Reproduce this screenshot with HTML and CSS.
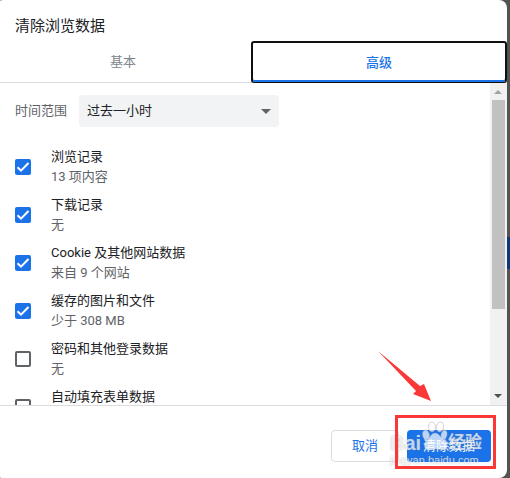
FILE: index.html
```
<!DOCTYPE html>
<html lang="zh-CN">
<head>
    <meta charset="UTF-8">
    <title>清除浏览数据</title>
    <link rel="stylesheet" href="styles.css">
</head>
<body>
    <div class="page-peek"></div>

    <div class="dialog" role="dialog" aria-labelledby="dialog-title">
        <h1 class="dialog-title" id="dialog-title">清除浏览数据</h1>

        <div class="tabs" role="tablist">
            <button class="tab" type="button" role="tab" aria-selected="false">基本</button>
            <button class="tab selected" type="button" role="tab" aria-selected="true">高级</button>
        </div>

        <div class="dialog-body">
            <div class="options">
                <div class="time-range">
                    <label for="range">时间范围</label>
                    <select class="range-select" id="range">
                        <option>过去一小时</option>
                    </select>
                </div>

                <label class="option">
                    <input type="checkbox" checked>
                    <span class="option-text">浏览记录<small>13 项内容</small></span>
                </label>
                <label class="option">
                    <input type="checkbox" checked>
                    <span class="option-text">下载记录<small>无</small></span>
                </label>
                <label class="option">
                    <input type="checkbox" checked>
                    <span class="option-text">Cookie 及其他网站数据<small>来自 9 个网站</small></span>
                </label>
                <label class="option">
                    <input type="checkbox" checked>
                    <span class="option-text">缓存的图片和文件<small>少于 308 MB</small></span>
                </label>
                <label class="option">
                    <input type="checkbox">
                    <span class="option-text">密码和其他登录数据<small>无</small></span>
                </label>
                <label class="option">
                    <input type="checkbox">
                    <span class="option-text">自动填充表单数据</span>
                </label>
            </div>

            <div class="scrollbar">
                <svg class="scroll-arrow up" viewBox="0 0 16 16"><path d="M4 10h8L8 6z"/></svg>
                <div class="scroll-thumb"></div>
                <svg class="scroll-arrow down" viewBox="0 0 16 16"><path d="M4 5h8L8 9z"/></svg>
            </div>
        </div>

        <div class="dialog-footer">
            <button class="btn cancel" type="button">取消</button>
            <button class="btn confirm" type="button">清除数据</button>
        </div>

        <!-- Annotations over the confirm button -->
        <div class="watermark">
            <span class="brand">Bai</span>
            <svg class="paw" viewBox="0 0 26 32">
                <ellipse cx="4" cy="14" rx="3.5" ry="5" transform="rotate(-12 4 14)"/>
                <ellipse cx="10" cy="6" rx="3.5" ry="5"/>
                <ellipse cx="18" cy="6" rx="3.5" ry="5" transform="rotate(8 18 6)"/>
                <ellipse cx="22" cy="14" rx="3" ry="5" transform="rotate(14 22 14)"/>
                <path d="M13 12c-4 0-5 5-9 8-3 3-2 9 3 9 3 0 4-1 7-1s4 1 7 1c5 0 6-6 2-9-4-3-6-8-10-8z"/>
            </svg>
            <span class="brand cn">经验</span>
            <span class="site">jingyan.baidu.com</span>
        </div>
        <div class="highlight"></div>
        <svg class="pointer" viewBox="0 0 54 51"><path d="M0 0 42 35 46 33 53 50 35 43 38 40z"/></svg>
    </div>
</body>
</html>
```

FILE: styles.css
```
:root {
    --blue: #1a73e8;
    --text-primary: #202124;
    --text-secondary: #5f6368;
    --line: #dadce0;
    --red: #fb3838;
}

* {
    margin: 0;
    padding: 0;
    box-sizing: border-box;
}

body {
    background: #535353;
    color: var(--text-primary);
    font-family: Roboto, "Noto Sans CJK SC", sans-serif;
    font-size: 13px;
    line-height: 20px;
    overflow: hidden;
}

button,
select {
    font: inherit;
}

/* Bit of the page behind the dialog */
.page-peek {
    position: absolute;
    top: 237px;
    right: 0;
    width: 8px;
    height: 32px;
    background: #0b3978;
}

.dialog {
    position: relative;
    display: flex;
    flex-direction: column;
    height: 100vh;
    margin: 0 3px 0 -5px;
    background: #fff;
    border-radius: 8px;
}

.dialog-title {
    padding: 16px 20px 5px;
    font-size: 15px;
    font-weight: 400;
    line-height: 20px;
}

.tabs {
    display: grid;
    grid-template-columns: 1fr 1fr;
    height: 42px;
    border-bottom: 1px solid var(--line);
}

.tab {
    height: 41px;
    border: none;
    background: none;
    color: #80868b;
}

/* Focus ring with the selection bar inside its bottom edge */
.tab.selected {
    height: 42px;
    border: 2px solid #101010;
    border-bottom-width: 1px;
    border-radius: 3px;
    box-shadow: inset 0 -2px var(--blue);
    color: var(--blue);
    font-weight: 500;
}

.dialog-body {
    display: flex;
    flex: 1;
    min-height: 0;
    overflow: hidden;
}

.options {
    flex: 1;
    padding: 12px 20px 0;
}

.time-range {
    display: flex;
    align-items: center;
    gap: 12px;
    margin-bottom: 16px;
    color: var(--text-secondary);
}

.range-select {
    appearance: none;
    width: 200px;
    height: 32px;
    padding: 0 8px;
    border: none;
    border-radius: 4px;
    background: #f1f3f4 url("data:image/svg+xml,%3Csvg xmlns='http://www.w3.org/2000/svg' width='10' height='5'%3E%3Cpath d='M0 0h10L5 5z' fill='%235f6368'/%3E%3C/svg%3E") no-repeat right 8px center;
    color: var(--text-primary);
}

.option {
    display: flex;
    align-items: center;
    gap: 20px;
    height: 48px;
}

.option input {
    appearance: none;
    width: 16px;
    height: 16px;
    border: 2px solid var(--text-secondary);
    border-radius: 2px;
}

.option input:checked {
    border: none;
    background: var(--blue) url("data:image/svg+xml,%3Csvg xmlns='http://www.w3.org/2000/svg' width='16' height='16'%3E%3Cpath d='M2.5 8.2 6 11.7 13.5 4' fill='none' stroke='%23fff' stroke-width='2'/%3E%3C/svg%3E");
}

.option-text {
    display: flex;
    flex-direction: column;
    height: 40px;
}

.option-text small {
    color: var(--text-secondary);
    font-size: 13px;
}

.scrollbar {
    display: flex;
    flex-direction: column;
    width: 17px;
    padding-top: 1px;
    background: #f1f1f1;
}

.scroll-arrow {
    width: 16px;
    height: 16px;
}

.scroll-arrow.up {
    fill: #a3a3a3;
}

.scroll-arrow.down {
    margin-top: auto;
    fill: #505050;
}

.scroll-thumb {
    height: 65%;
    margin: 0 2px;
    background: #c1c1c1;
}

.dialog-footer {
    display: flex;
    justify-content: flex-end;
    gap: 8px;
    padding: 24px 16px 16px;
    border-top: 1px solid var(--line);
}

.btn {
    height: 32px;
    padding: 0 16px;
    border: 1px solid var(--line);
    border-radius: 4px;
    background: #fff;
    color: var(--blue);
}

.btn.cancel {
    padding: 0 20px;
}

.btn.confirm {
    border: none;
    background: var(--blue);
    color: #fff;
}

.watermark {
    position: absolute;
    right: 25px;
    bottom: 11px;
    display: grid;
    grid-template-columns: 32px 26px 34px;
    align-items: end;
    color: rgba(255, 255, 255, 0.7);
    text-shadow: 0 0 2px rgba(130, 130, 140, 0.5);
    pointer-events: none;
}

.brand {
    font-family: "Liberation Sans", "Noto Sans CJK SC", sans-serif;
    font-size: 20px;
    font-weight: 700;
    line-height: 20px;
}

.brand.cn {
    font-size: 17px;
}

.paw {
    width: 26px;
    height: 32px;
    fill: rgba(255, 255, 255, 0.7);
    stroke: rgba(150, 150, 160, 0.4);
    stroke-width: 1;
}

.site {
    grid-column: 1 / -1;
    font-family: "Liberation Sans", sans-serif;
    font-size: 11px;
    line-height: 14px;
}

.highlight {
    position: absolute;
    right: 11px;
    bottom: 9px;
    width: 101px;
    height: 54px;
    border: 3px solid var(--red);
}

.pointer {
    position: absolute;
    right: 75px;
    bottom: 76px;
    width: 54px;
    height: 51px;
    fill: var(--red);
}
```
